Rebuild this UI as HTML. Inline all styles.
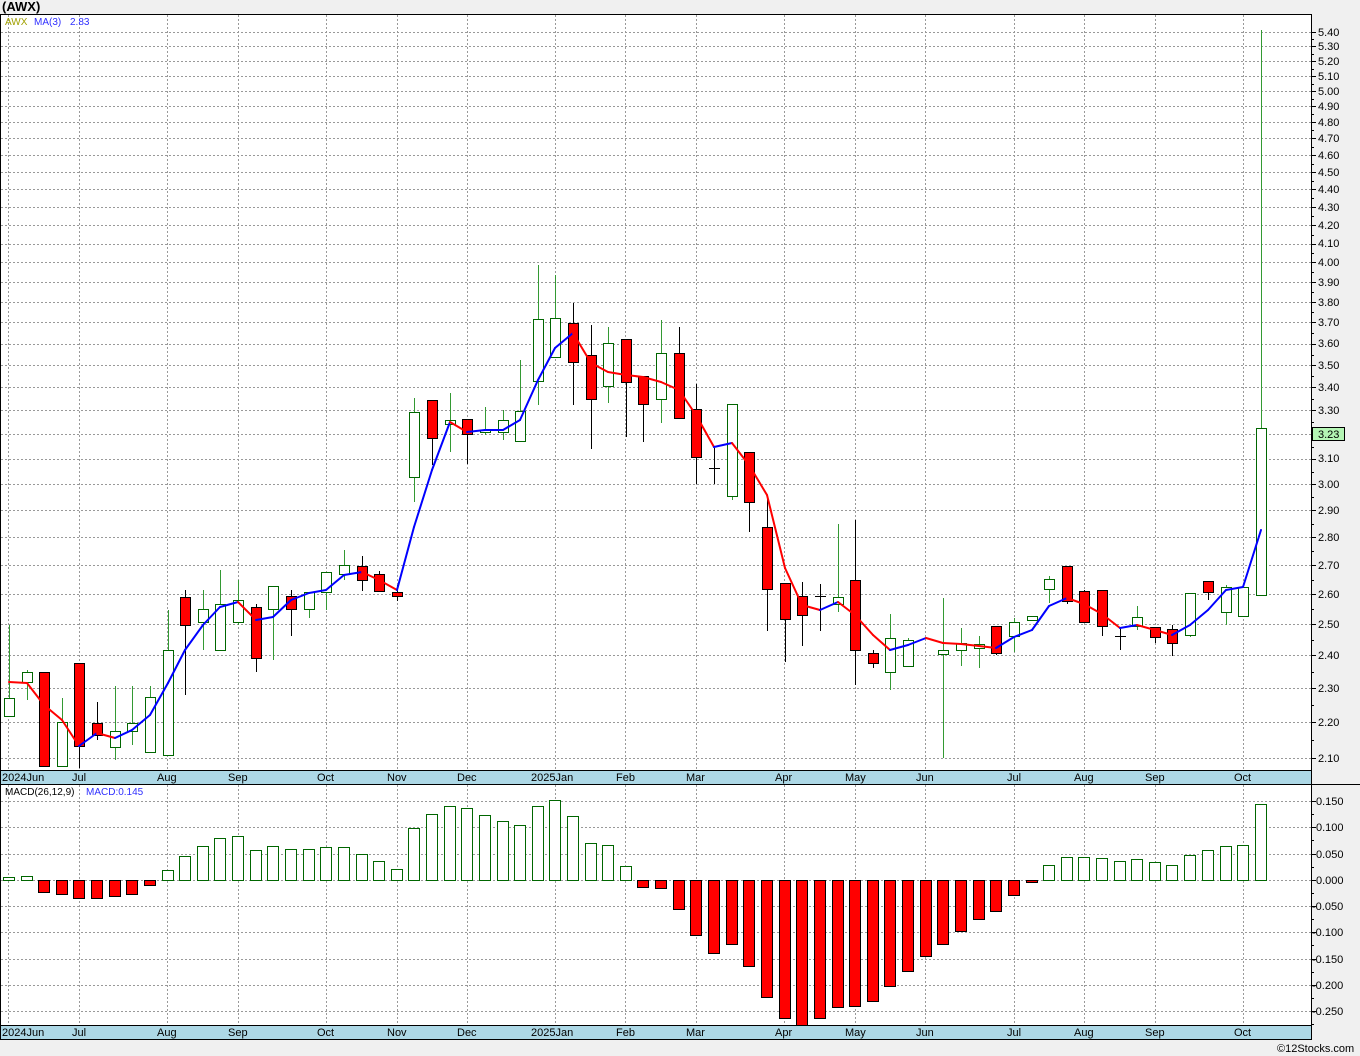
<!DOCTYPE html>
<html><head><meta charset="utf-8"><style>
body{margin:0;width:1360px;height:1056px;background:#f0f0f0;overflow:hidden;font-family:"Liberation Sans",sans-serif}
svg{position:absolute;left:0;top:0}
text{font-family:"Liberation Sans",sans-serif;font-size:11px;fill:#000}
</style></head><body>
<svg id="s" width="1360" height="1056" xmlns="http://www.w3.org/2000/svg">
<rect x="0" y="14" width="1311" height="1025" fill="#fff"/>
<g id="grid"></g>
<rect x="1" y="770" width="1310" height="14" fill="#add8e6"/>
<rect x="1" y="1025" width="1310" height="14" fill="#add8e6"/>
<g id="shapes"></g>
<g stroke="#000" fill="none">
<line x1="0" y1="14.5" x2="1312" y2="14.5"/>
<line x1="0.5" y1="14" x2="0.5" y2="1039"/>
<line x1="1311.5" y1="14" x2="1311.5" y2="1039"/>
<line x1="0" y1="770.5" x2="1312" y2="770.5"/>
<line x1="0" y1="784.5" x2="1360" y2="784.5"/>
<line x1="0" y1="1025.5" x2="1312" y2="1025.5"/>
<line x1="0" y1="1039.5" x2="1312" y2="1039.5"/>
</g>
<text x="2" y="11" style="font-weight:bold;font-size:13px">(AWX)</text>
<text x="5" y="25" style="font-size:10px;fill:#a0a000">AWX</text>
<text x="34" y="25" style="font-size:10px;fill:#3030ff">MA(3)</text>
<text x="70" y="25" style="font-size:10px;fill:#3030ff">2.83</text>
<text x="5" y="795" style="font-size:10px">MACD(26,12,9)</text>
<text x="86" y="795" style="font-size:10px;fill:#3030ff">MACD:0.145</text>
<g>
<text x="2" y="781">2024Jun</text><text x="72" y="781">Jul</text><text x="157" y="781">Aug</text><text x="228" y="781">Sep</text><text x="317" y="781">Oct</text><text x="387" y="781">Nov</text><text x="457" y="781">Dec</text><text x="531" y="781">2025Jan</text><text x="616" y="781">Feb</text><text x="686" y="781">Mar</text><text x="775" y="781">Apr</text><text x="845" y="781">May</text><text x="916" y="781">Jun</text><text x="1007" y="781">Jul</text><text x="1074" y="781">Aug</text><text x="1145" y="781">Sep</text><text x="1234" y="781">Oct</text>
</g>
<g transform="translate(0,255)">
<text x="2" y="781">2024Jun</text><text x="72" y="781">Jul</text><text x="157" y="781">Aug</text><text x="228" y="781">Sep</text><text x="317" y="781">Oct</text><text x="387" y="781">Nov</text><text x="457" y="781">Dec</text><text x="531" y="781">2025Jan</text><text x="616" y="781">Feb</text><text x="686" y="781">Mar</text><text x="775" y="781">Apr</text><text x="845" y="781">May</text><text x="916" y="781">Jun</text><text x="1007" y="781">Jul</text><text x="1074" y="781">Aug</text><text x="1145" y="781">Sep</text><text x="1234" y="781">Oct</text>
</g>
<g>
<text x="1318" y="762">2.10</text><text x="1318" y="726">2.20</text><text x="1318" y="692">2.30</text><text x="1318" y="659">2.40</text><text x="1318" y="628">2.50</text><text x="1318" y="598">2.60</text><text x="1318" y="569">2.70</text><text x="1318" y="541">2.80</text><text x="1318" y="514">2.90</text><text x="1318" y="488">3.00</text><text x="1318" y="462">3.10</text><text x="1318" y="414">3.30</text><text x="1318" y="391">3.40</text><text x="1318" y="369">3.50</text><text x="1318" y="347">3.60</text><text x="1318" y="326">3.70</text><text x="1318" y="306">3.80</text><text x="1318" y="286">3.90</text><text x="1318" y="266">4.00</text><text x="1318" y="247">4.10</text><text x="1318" y="229">4.20</text><text x="1318" y="211">4.30</text><text x="1318" y="193">4.40</text><text x="1318" y="176">4.50</text><text x="1318" y="159">4.60</text><text x="1318" y="142">4.70</text><text x="1318" y="126">4.80</text><text x="1318" y="110">4.90</text><text x="1318" y="95">5.00</text><text x="1318" y="80">5.10</text><text x="1318" y="65">5.20</text><text x="1318" y="50">5.30</text><text x="1318" y="36">5.40</text>
</g>
<rect x="1312.5" y="427.5" width="32" height="13" fill="#b4f5b4" stroke="#000"/>
<text x="1318" y="438">3.23</text>
<g>
<text x="1316" y="805">0.150</text><text x="1316" y="831">0.100</text><text x="1316" y="858">0.050</text><text x="1316" y="884">0.000</text><text x="1312" y="910">-0.050</text><text x="1312" y="936">-0.100</text><text x="1312" y="963">-0.150</text><text x="1312" y="989">-0.200</text><text x="1312" y="1015">-0.250</text>
</g>
<text x="1277" y="1052" style="font-size:11px">©12Stocks.com</text>
</svg>
<script>
var NS="http://www.w3.org/2000/svg";
function el(p,t,a){var e=document.createElementNS(NS,t);for(var k in a)e.setAttribute(k,a[k]);p.appendChild(e);return e;}
var G=document.getElementById('grid'),S=document.getElementById('shapes');
var mx=[8,79,167,238,326,397,467,555,625,696,784,855,925,1014,1084,1155,1243];
mx.forEach(function(x){el(G,'line',{x1:x+.5,y1:15,x2:x+.5,y2:770,stroke:'#999','stroke-dasharray':'2,2'});el(G,'line',{x1:x+.5,y1:785,x2:x+.5,y2:1025,stroke:'#999','stroke-dasharray':'2,2'});});
var py=[];for(var p=21;p<=54;p++){py.push(Math.round(758-769*Math.log(p/21)));}
py.forEach(function(y,i){el(G,'line',{x1:1,y1:y+.5,x2:1311,y2:y+.5,stroke:'#999','stroke-dasharray':'2,2'});el(G,'line',{x1:1311,y1:y+.5,x2:1316,y2:y+.5,stroke:'#000'});if(i>0){var m=Math.round((y+py[i-1])/2);el(G,'line',{x1:1311,y1:m+.5,x2:1314,y2:m+.5,stroke:'#000'});}});
for(var i=0;i<9;i++){var y=Math.round(801+i*26.25);el(G,'line',{x1:1,y1:y+.5,x2:1311,y2:y+.5,stroke:'#999','stroke-dasharray':'2,2'});el(G,'line',{x1:1311,y1:y+.5,x2:1316,y2:y+.5,stroke:'#000'});el(G,'line',{x1:1311,y1:y+13.5,x2:1314,y2:y+13.5,stroke:'#000'});}
var C=[[9,698,716,625,716,'w'],[27,672,682,670,700,'w'],[44,672,766,672,766,'r'],[62,722,766,698,766,'w'],[79,663,746,663,768,'r'],[97,723,735,702,740,'r'],[115,731,747,686,760,'w'],[132,723,731,686,745,'w'],[150,697,752,686,752,'w'],[168,650,755,610,755,'w'],[185,597,625,590,695,'r'],[203,609,622,590,650,'w'],[220,604,650,570,650,'w'],[238,600,622,580,625,'w'],[256,607,658,604,672,'r'],[273,586,609,586,660,'w'],[291,596,609,590,636,'r'],[309,592,609,592,618,'w'],[326,572,592,572,610,'w'],[344,565,574,550,580,'w'],[362,566,580,556,591,'r'],[379,574,591,571,592,'r'],[397,592,596,585,601,'r'],[414,412,477,398,502,'w'],[432,400,438,400,465,'r'],[450,420,424,393,452,'w'],[467,419,434,419,464,'r'],[485,430,432,407,435,'w'],[503,420,432,410,440,'w'],[520,411,441,360,441,'w'],[538,319,381,265,405,'w'],[555,318,357,275,357,'w'],[573,323,362,303,405,'r'],[591,355,399,325,449,'r'],[608,343,386,327,403,'w'],[626,339,382,339,437,'r'],[643,376,404,376,442,'r'],[661,353,399,320,423,'w'],[679,353,418,327,418,'r'],[696,409,457,384,484,'r'],[714,468,469,448,484,'d'],[732,404,496,404,500,'w'],[749,452,502,452,532,'r'],[767,527,589,498,631,'r'],[785,583,619,583,662,'r'],[802,596,615,582,646,'r'],[820,596,596,584,631,'d'],[838,597,604,524,612,'w'],[855,580,650,520,685,'r'],[873,653,663,650,668,'r'],[890,638,672,614,690,'w'],[908,640,666,638,666,'w'],[943,650,654,598,758,'w'],[961,643,650,628,666,'w'],[979,644,648,636,668,'w'],[996,626,653,626,655,'r'],[1014,622,636,618,652,'w'],[1032,616,620,616,620,'w'],[1049,579,589,576,603,'w'],[1067,566,601,566,604,'r'],[1084,591,622,590,622,'r'],[1102,590,626,590,636,'r'],[1120,636,636,628,650,'d'],[1137,617,626,606,630,'w'],[1155,627,637,627,643,'r'],[1172,629,643,625,656,'r'],[1190,593,635,593,637,'w'],[1208,581,592,581,600,'r'],[1226,587,612,585,625,'w'],[1243,587,616,587,616,'w'],[1261,428,595,30,595,'w']];
C.forEach(function(c){var x=c[0];
el(S,'line',{x1:x+.5,y1:c[3],x2:x+.5,y2:c[4],stroke:c[5]=='w'?'#393':'#000'});
if(c[5]=='d'){el(S,'line',{x1:x-5,y1:c[1]+.5,x2:x+6,y2:c[1]+.5,stroke:'#000'});return;}
el(S,'rect',{x:x-4.5,y:c[1]+.5,width:10,height:Math.max(1,c[2]-c[1]),fill:c[5]=='r'?'#f00':'#fff',stroke:c[5]=='r'?'#000':'#060'});});
var M=[[9,682],[27,683],[44,705],[62,720],[79,746],[97,733],[115,738],[132,730],[150,715],[168,683],[185,650],[203,625],[220,607],[238,602],[256,620],[273,617],[291,600],[309,593],[326,590],[344,575],[362,572],[379,580],[397,590],[414,527],[432,470],[450,422],[467,432],[485,430],[503,430],[520,420],[538,380],[555,348],[573,333],[591,363],[608,372],[626,375],[643,377],[661,382],[679,390],[696,415],[714,447],[732,443],[749,465],[767,495],[785,568],[802,605],[820,610],[838,602],[855,615],[873,635],[890,650],[908,645],[926,638],[943,643],[961,644],[979,646],[996,648],[1014,637],[1032,630],[1049,606],[1067,598],[1084,604],[1102,614],[1120,628],[1137,625],[1155,630],[1172,635],[1190,625],[1208,610],[1226,590],[1243,587],[1261,530]];
for(var i=1;i<M.length;i++){el(S,'line',{x1:M[i-1][0],y1:M[i-1][1],x2:M[i][0],y2:M[i][1],stroke:M[i][1]>M[i-1][1]?'#f00':'#00f','stroke-width':2,'stroke-linecap':'round'});}
var D=[[9,877],[27,876],[44,892],[62,894],[79,898],[97,898],[115,896],[132,894],[150,885],[168,870],[185,856],[203,846],[220,838],[238,836],[256,850],[273,846],[291,849],[309,849],[326,847],[344,847],[362,854],[379,861],[397,869],[414,828],[432,814],[450,806],[467,808],[485,815],[503,821],[520,825],[538,806],[555,800],[573,816],[591,843],[608,845],[626,866],[643,887],[661,888],[679,909],[696,935],[714,953],[732,944],[749,966],[767,997],[785,1018],[802,1025],[820,1018],[838,1007],[855,1006],[873,1001],[890,986],[908,971],[926,956],[943,944],[961,931],[979,919],[996,911],[1014,895],[1032,882],[1049,865],[1067,857],[1084,857],[1102,858],[1120,861],[1137,859],[1155,862],[1172,865],[1190,855],[1208,850],[1226,846],[1243,845],[1261,804]];
D.forEach(function(d){var x=d[0],y=d[1];if(y<880){el(S,'rect',{x:x-5.5,y:y+.5,width:11,height:880-y,fill:'#fff',stroke:'#060'});}else{el(S,'rect',{x:x-5.5,y:880.5,width:11,height:Math.max(1,y-880),fill:'#f00',stroke:'#000'});}});
</script>
</body></html>
